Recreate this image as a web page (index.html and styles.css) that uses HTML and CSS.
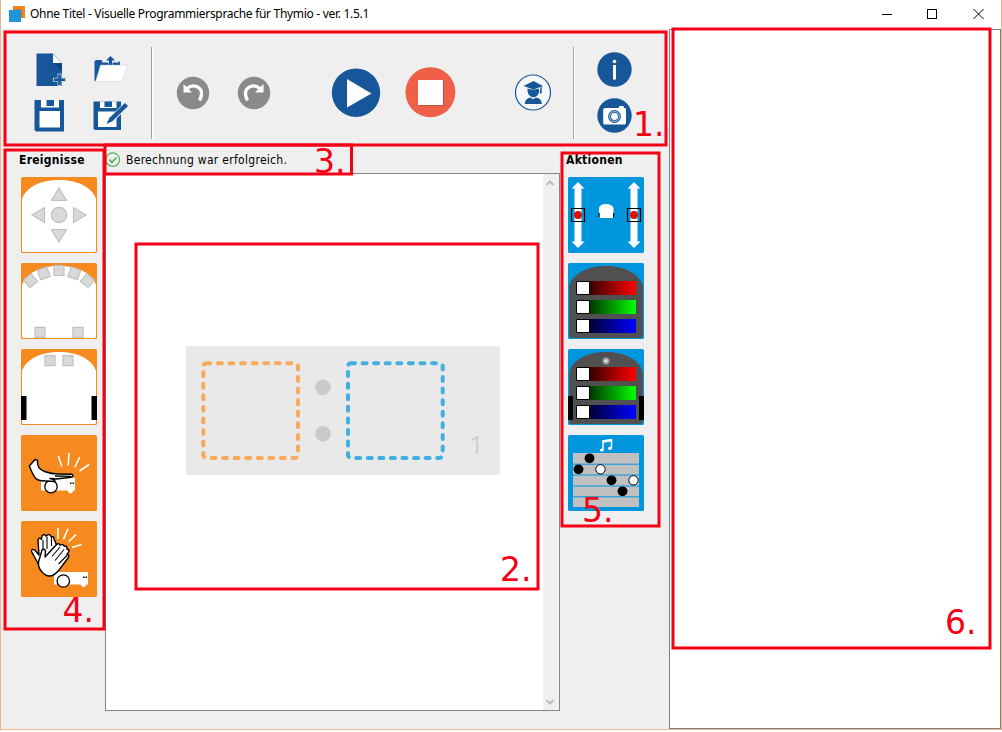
FILE: index.html
```html
<!DOCTYPE html>
<html lang="de">
<head>
<meta charset="utf-8">
<title>Ohne Titel - Visuelle Programmiersprache für Thymio</title>
<link rel="stylesheet" href="styles.css">
</head>
<body>
<div class="window">
  <header class="titlebar">
    <svg class="app-icon" width="16" height="16" viewBox="0 0 16 16"><path fill="#f5841f" d="M4 0h12v12H4z"/><path fill="#1f95d4" d="M0 4h12v12H0z"/><path fill="#876f5a" d="M4 3.500h8.500V12H12V4H4z"/></svg>
    <h1 class="title">Ohne Titel - Visuelle Programmiersprache für Thymio - ver. 1.5.1</h1>
    <svg class="controls" width="104" height="12" viewBox="0 0 104 12" fill="none" stroke="#000" shape-rendering="crispEdges"><path d="M0 6.500h10M45.500 1.500h9v9h-9z"/><path shape-rendering="auto" d="M91.500 1l10 10M101.500 1l-10 10"/></svg>
  </header>
  <div class="main">
    <div class="left">
      <nav class="toolbar">
        <div class="files">
          <svg width="36" height="36" viewBox="33 51 36 36"><path fill="#175799" d="M36.500 53.500H53L62 63v23H36.500z"/><path fill="#fff" d="M53 54l9 9h-9z"/><path fill="#0d4685" d="M53 63h9v8z"/><path d="M59.500 73.500v12.500M53 79.700h13" stroke="#b6cbe0" stroke-width="4"/><path d="M59.500 74.500v10.500M54 79.700h11" stroke="#175799" stroke-width="2.600"/></svg>
          <svg width="36" height="36" viewBox="93 51 36 36"><path fill="#175799" d="M94.500 62q0-2 2-2h5l1 1.500H120V68l-19 13h-6.500z"/><path d="M110.500 66v-8M106.500 60.500l4-4 4 4z" stroke="#efefef" stroke-width="4"/><path d="M110.500 66v-8" stroke="#175799" stroke-width="3"/><path fill="#175799" d="M106 60.500l4.500-4.500 4.500 4.500z"/><path fill="#fff" stroke="#aac3dc" stroke-width=".4" d="M100.500 65H128l-6 16.500H95.500z"/></svg>
          <svg width="36" height="36" viewBox="33 97 36 36"><path fill="#175799" d="M34.500 100H64v31.500H36l-1.500-1.500z"/><path fill="#fff" d="M41 100h18v7.500H41zM39.500 111H60v16.500H39.500z"/><path fill="#175799" d="M46.500 100H54v6h-7.500z"/></svg>
          <svg width="36" height="36" viewBox="93 97 36 36"><path fill="#175799" d="M93.500 101.500h27.500V130H95l-1.500-1.500z"/><path fill="#fff" d="M100 101.500h16.500v6.500H100zM98 111.500h18.500v15.500H98z"/><path fill="#175799" d="M104.500 101.500h7.500v5.500h-7.500z"/><path stroke="#efefef" stroke-width="6" d="M127 104l-16 16"/><path stroke="#175799" stroke-width="4.500" d="M126.500 104.500l-15.500 15"/><path fill="#175799" d="M109.500 117.500l3.500 3.500-6.500 3z"/></svg>
        </div>
        <i class="sep"></i>
        <svg class="undo" width="34" height="34" viewBox="0 0 34 34"><circle cx="17" cy="17" r="16.200" fill="#8a8a8a"/><path d="M11 12.500C18 6.500 26 12 25.500 18c-.2 3-1 4.500-2 6.500" fill="none" stroke="#fff" stroke-width="3.300"/><path fill="#fff" d="M7.500 8v8.500H16z"/></svg>
        <svg class="redo" width="34" height="34" viewBox="0 0 34 34"><circle cx="17" cy="17" r="16.200" fill="#8a8a8a"/><path d="M23 12.500C16 6.500 8 12 8.500 18c.2 3 1 4.500 2 6.500" fill="none" stroke="#fff" stroke-width="3.300"/><path fill="#fff" d="M26.500 8v8.500H18z"/></svg>
        <svg class="play" width="50" height="50" viewBox="0 0 50 50"><circle cx="25" cy="24.700" r="24.200" fill="#175799"/><path fill="#fff" d="M16 11l24.500 14.500L16 39.500z"/></svg>
        <svg class="stop" width="52" height="52" viewBox="0 0 52 52"><circle cx="25.400" cy="25.200" r="25" fill="#f06048"/><path fill="#b9503f" d="M14 14h25v25H14z"/><path fill="#fff" d="M13 13h25v25H13z"/></svg>
        <svg class="teach" width="38" height="38" viewBox="514 74 38 38"><circle cx="533" cy="92.500" r="17.500" fill="#f5f8fb" stroke="#175799" stroke-width="1.200"/><g fill="#175799"><path d="M523.500 86l10-5 9.500 5-9.500 3.500z"/><path d="M527.500 88.500q5.800 2.200 11.500 0V92q-1 5-5.700 5.200Q528.500 97 527.500 91z"/><path d="M524.800 104q0-5.500 5.700-6.500l2.500 1.800 2.800-1.800q6 1 6 6.500z"/><path d="M540.500 86.500h1.200v7h-1.900z"/></g></svg>
        <i class="sep second"></i>
        <div class="tools">
          <svg width="36" height="36" viewBox="0 0 36 36"><circle cx="17.500" cy="17.500" r="17.200" fill="#175799"/><circle cx="17.500" cy="9.500" r="1.800" fill="#fff"/><path fill="#fff" d="M16 13h3v14.500h-3z"/></svg>
          <svg width="36" height="36" viewBox="0 0 36 36"><circle cx="17.500" cy="17.500" r="17.200" fill="#175799"/><path fill="#fff" d="M8 10h13.500l1-2h4l.5 2h1q1 0 1 1.500V25q0 1.500-1.500 1.500h-20Q6.200 26.500 6.200 25V11.500Q6.200 10 8 10z"/><circle cx="17.500" cy="18.500" r="6.400" fill="#175799"/><circle cx="17.500" cy="18.500" r="4.900" fill="none" stroke="#dbe7f3" stroke-width=".8"/><circle cx="17.500" cy="18.500" r="3.400" fill="#fff"/></svg>
        </div>
      </nav>
      <div class="work">
        <aside class="events">
          <h2>Ereignisse</h2>
          <svg class="tile" viewBox="0 0 76 76"><rect width="76" height="76" rx="1.500" fill="#f78a1e"/><path class="shell" d="M1 74V22C5 10 20 3 38 3s33 7 37 19v52l-1 1H2z"/><g class="sensor"><path d="M38 11l7.500 12.500h-15zM38 65l7.500-12.500h-15zM11 38l12.500-7.500v15zM65 38l-12.500-7.500v15z"/><circle cx="38" cy="38" r="7.700"/></g></svg>
          <svg class="tile" viewBox="0 0 76 76"><rect width="76" height="76" rx="1.500" fill="#f78a1e"/><path class="shell" d="M1 74V22C5 10 20 3 38 3s33 7 37 19v52l-1 1H2z"/><g class="sensor"><path d="M33 2.500h10v10H33zM14 64.300h10v10H14zM52 64.300h10v10H52z"/><path transform="translate(22.700 10.300) rotate(-20)" d="M-5-5H5V5H-5z"/><path transform="translate(53.300 10.300) rotate(20)" d="M-5-5H5V5H-5z"/><path transform="translate(9.500 17.700) rotate(-40)" d="M-5-5H5V5H-5z"/><path transform="translate(66.500 17.700) rotate(40)" d="M-5-5H5V5H-5z"/></g></svg>
          <svg class="tile" viewBox="0 0 76 76"><rect width="76" height="76" rx="1.500" fill="#f78a1e"/><path class="shell" d="M1 74V22C5 10 20 3 38 3s33 7 37 19v52l-1 1H2z"/><path class="sensor" d="M24 6.700h10v10H24zM42 6.700h10v10H42z"/><path d="M0 47h5.500v24H0zM70.500 47H76v24h-5.500z"/></svg>
          <svg class="tile" viewBox="0 0 76 76"><rect width="76" height="76" rx="1.500" fill="#f78a1e"/><path class="ray" d="M37.300 21l3.500 10.500M48 18l-.8 12.500M58.700 22l-5 10.500M68 29.500L58.500 36"/><path fill="#fff" d="M20 43h34v12.500h-1.500q-1 3-3 3t-3-3H20z"/><path d="M49 47.500h1.500V49H49zM51.500 47.500H53V49h-1.500z"/><circle class="wheel" cx="30" cy="51.700" r="6.200"/><path class="hand" d="M8.300 31l5.700-6.500 2.500.7c-.7 6.300 2 9.500 7 11.300 4 1.500 7 2.500 14 2.500l13.500.2q2 1.500-.5 3L35 44l-6-.5c3 .5 5 1.300 5 3l-9-.5c-7 0-10-1-12-5C11 38 10 35 8.300 31z"/><path d="M34 41l16 .3" fill="none" stroke="#000" stroke-width="1.300"/></svg>
          <svg class="tile" viewBox="0 0 76 76"><rect width="76" height="76" rx="1.500" fill="#f78a1e"/><path class="ray" d="M37 7v10.700M47 7.700l-4.500 10.500M55 13.700l-7.300 6.800M60.500 23.500L51 26.500"/><path fill="#fff" d="M33 51h34v12.500h-1.500q-1 2.500-3 2.500t-3-2.500H33z"/><path d="M62 55.500h1.500V57H62zM64.500 55.500H66V57h-1.500z"/><circle class="wheel" cx="42.300" cy="60" r="6.200"/><path class="hand" d="M19 46L10.500 30.500q0-3 3-1.700L18 34l-1-15q1-3 3.500-.8l.5-3.200q2-3 4 0l1-.7q2.500-2 4 1.200 3-.5 3 2.500l3 7-8 20z"/><path class="hand" d="M21 51q-4-4-3.500-10l3.500-12q2.500-2 3.500 1l-.5 6 12-13q2.500-1 3 1.200 3-1.500 4 .8 3.500-.5 3 3 3.500 1 1 4l-1 1q3 1 1 4l-9 12q-9 11-17 2z"/><path fill="none" stroke="#000" stroke-width="1.100" d="M22 19v10M26 15.500V28M30.500 16v9M39 26l-8 9.500M43 28.500l-9 11M46.500 34l-9 9"/></svg>
        </aside>
        <section class="center">
          <div class="status">
            <svg width="16" height="16" viewBox="0 0 16 16" fill="none" stroke="#4db34f"><circle cx="7.700" cy="7.700" r="6.800" stroke-width="1.100"/><path stroke-width="1.700" d="M4.500 7.500l2.400 3 4.500-5"/></svg>
            <span>Berechnung war erfolgreich.</span>
          </div>
          <div class="canvas">
            <div class="scene">
              <div class="pair">
                <svg class="slots" width="314" height="129" viewBox="186 346 314 129"><g fill="none" stroke-width="4" stroke-linecap="round" stroke-dasharray="4 7.570"><rect x="203.300" y="363.200" width="94.700" height="94.700" rx="3" stroke="#f9a95b"/><rect x="348" y="363.200" width="94.700" height="94.700" rx="3" stroke="#43aee0"/></g><g fill="#cacaca"><circle cx="323" cy="387.500" r="7.800"/><circle cx="323" cy="433.700" r="7.800"/></g><text class="line-no" x="469" y="454">1</text></svg>
              </div>
            </div>
            <div class="scroll">
              <svg width="10" height="8" viewBox="0 0 10 8"><path class="chev" d="M1.500 6l3.500-3.500L8.500 6"/></svg>
              <svg width="10" height="8" viewBox="0 0 10 8"><path class="chev" d="M1.500 2l3.500 3.500L8.500 2"/></svg>
            </div>
          </div>
        </section>
        <aside class="actions">
          <h2>Aktionen</h2>
          <svg class="tile" viewBox="0 0 76 76"><rect width="76" height="76" rx="1.500" fill="#0096de"/><g fill="#fff"><path d="M10 5l6.500 6.500h-3v53h3L10 71l-6.500-6.500h3v-53h-3z"/><path d="M66 5l6.500 6.500h-3v53h3L66 71l-6.500-6.500h3v-53h-3z"/><path d="M31 41V31q1-4 7-4t7.500 4v10z"/></g><path d="M30.500 36h1.200v4.500h-1.200zM45 36h1.200v4.500H45z"/><path fill="none" stroke="#000" stroke-width="1.200" d="M3.500 31.500h13v13h-13zM59.500 31.500h13v13h-13z"/><g fill="#e10f00"><circle cx="10" cy="38" r="4"/><circle cx="66" cy="38" r="4"/></g></svg>
          <svg class="tile" viewBox="0 0 76 76">
            <defs><linearGradient id="r"><stop stop-color="#300"/><stop offset="1" stop-color="red"/></linearGradient><linearGradient id="g"><stop stop-color="#030"/><stop offset="1" stop-color="lime"/></linearGradient><linearGradient id="b"><stop stop-color="#003"/><stop offset="1" stop-color="blue"/></linearGradient><radialGradient id="led"><stop stop-color="#fff"/><stop offset="1" stop-color="#505050"/></radialGradient>
            <g id="sliders"><path fill="url(#r)" d="M21 18h47v14H21z"/><path fill="url(#g)" d="M21 37h47v14H21z"/><path fill="url(#b)" d="M21 56h47v14H21z"/><path fill="#fff" stroke="#000" d="M8.500 18.500h13v13h-13zM8.500 37.500h13v13h-13zM8.500 56.500h13v13h-13z"/></g></defs>
            <rect width="76" height="76" rx="1.500" fill="#0096de"/><path class="dark" d="M1.200 73V23C5 10 20 3 38 3s33 7 36.800 20v50l-2 2H3z"/><use href="#sliders"/></svg>
          <svg class="tile" viewBox="0 0 76 76"><rect width="76" height="76" rx="1.500" fill="#0096de"/><path class="dark" d="M1.200 73V23C5 10 20 3 38 3s33 7 36.800 20v50l-2 2H3z"/><circle cx="38" cy="12" r="4.500" fill="url(#led)"/><use href="#sliders"/><path d="M0 47h5v24H0zM71 47h5v24h-5z"/></svg>
          <svg class="tile" viewBox="0 0 76 76"><rect width="76" height="76" rx="1.500" fill="#0096de"/><path fill="#c0c0c0" d="M5 18h66v54H5z"/><path stroke="#0096de" d="M5 29.200h66M5 40h66M5 51h66M5 61.800h66"/><path fill="none" stroke="#fff" stroke-width="1.500" d="M35 15V6l8.500-1.200V13"/><path stroke="#fff" stroke-width="2.500" d="M35 6.500l8.500-1.200"/><g fill="#fff"><ellipse cx="33.800" cy="15" rx="2" ry="1.600"/><ellipse cx="42" cy="13.300" rx="2" ry="1.600"/></g><circle cx="21.500" cy="23.300" r="4.900"/><circle cx="10.500" cy="34.300" r="4.900"/><circle cx="43.500" cy="45.300" r="4.900"/><circle cx="54.500" cy="56.300" r="4.900"/><g fill="#fff" stroke="#000"><circle cx="32.500" cy="34.300" r="4.700"/><circle cx="65.500" cy="45.300" r="4.700"/></g></svg>
        </aside>
      </div>
    </div>
    <section class="code"></section>
  </div>
  <svg class="notes" width="1002" height="732" viewBox="0 0 1002 732">
    <g fill="none" stroke="#f50014" stroke-width="3"><path d="M5 32h661v113H5z"/><path d="M136 244h402v345H136z"/><path d="M105 145h246.500v29H105z"/><path d="M5 150h99v479H5z"/><path d="M562 153h97v373h-97z"/><path d="M673 29h317v619H673z"/></g>
    <g class="note-text"><text x="633" y="136">1.</text><text x="500" y="581">2.</text><text x="314" y="173">3.</text><text x="62.500" y="622">4.</text><text x="582" y="522">5.</text><text x="945" y="634">6.</text></g>
  </svg>
</div>
</body>
</html>
```
FILE: styles.css
```css
* { box-sizing: border-box; }
body { margin: 0; background: #fff; }
svg { display: block; flex: none; }

.window {
  position: relative;
  display: flex;
  flex-direction: column;
  width: 1002px;
  height: 730px;
  border: solid #e9b58a;
  border-width: 0 1px 1px;
  background: #efefef;
}

.titlebar {
  display: flex;
  align-items: center;
  height: 29px;
  flex: none;
  padding: 0 15px 2px 8px;
  background: #fff;
}
.title {
  margin: 0 auto 0 5px;
  font: 400 12px/16px "Noto Sans", sans-serif;
  letter-spacing: -0.3px;
  color: #000;
  white-space: nowrap;
}

.main { display: flex; flex: 1; min-height: 0; }
.left { display: flex; flex-direction: column; width: 668px; }

.toolbar {
  display: flex;
  align-items: center;
  height: 116px;
  padding: 12px 0 0 32px;
  flex: none;
}
.files { display: grid; grid-template-columns: 36px 36px; gap: 10px 24px; margin-top: -2px; }
.sep {
  width: 2px;
  height: 92px;
  margin-left: 22px;
  border-left: 1px solid #a0a0a0;
  background: #fff;
}
.second { margin-left: 21px; }
.undo { margin-left: 23px; }
.redo { margin-left: 27px; }
.play { margin-left: 60px; }
.stop { margin-left: 24px; }
.teach { margin-left: 57px; }
.tools { display: grid; gap: 10px; margin-left: 22px; }

.work { display: flex; flex: 1; min-height: 0; }
.events { width: 104px; padding-left: 20px; }
.actions { padding-left: 8px; }
.events, .actions { display: flex; flex-direction: column; gap: 10px; }
h2 {
  height: 22px;
  margin: 0 0 0 -2px;
  padding-top: 7px;
  font: bold 12px/16px "DejaVu Sans Condensed", "DejaVu Sans", sans-serif;
  letter-spacing: 0.28px;
  white-space: nowrap;
}
.tile { width: 76px; height: 76px; }

.center { display: flex; flex-direction: column; width: 455px; height: 566px; }
.status {
  display: flex;
  align-items: center;
  gap: 5px;
  height: 28px;
  flex: none;
  padding: 2px 0 0;
  font: 12px/16px "DejaVu Sans Condensed", "DejaVu Sans", sans-serif;
  letter-spacing: 0.3px;
}
.canvas { display: flex; flex: 1; border: 1px solid #828790; background: #fff; }
.scene { flex: 1; padding: 172px 0 0 80px; }
.pair { width: 314px; height: 129px; border-radius: 2px; background: #e9e9e9; }
.line-no { font: 400 26px "Open Sans", sans-serif; fill: #cdcdcd; }
.scroll {
  display: flex;
  flex-direction: column;
  justify-content: space-between;
  align-items: center;
  width: 16px;
  padding: 5px 2px 4px 0;
  background: #f0f0f0;
}
.chev { fill: none; stroke: #bdbdbd; stroke-width: 2; }

.code { flex: 1; border: 1px solid #808080; background: #fff; }

.shell { fill: #fff; }
.sensor { fill: #d9d9d9; stroke: #c0c0c0; stroke-width: 1.2; }
.ray { fill: none; stroke: #fff; stroke-width: 1.6; }
.wheel { fill: #fff; stroke: #000; stroke-width: 1.3; }
.hand { fill: #fff; stroke: #000; stroke-width: 1.4; stroke-linejoin: round; }
.dark { fill: #505050; }

.notes { position: absolute; left: -1px; top: 0; pointer-events: none; }
.note-text { font: 33px "DejaVu Sans", sans-serif; fill: #f50014; }
```
